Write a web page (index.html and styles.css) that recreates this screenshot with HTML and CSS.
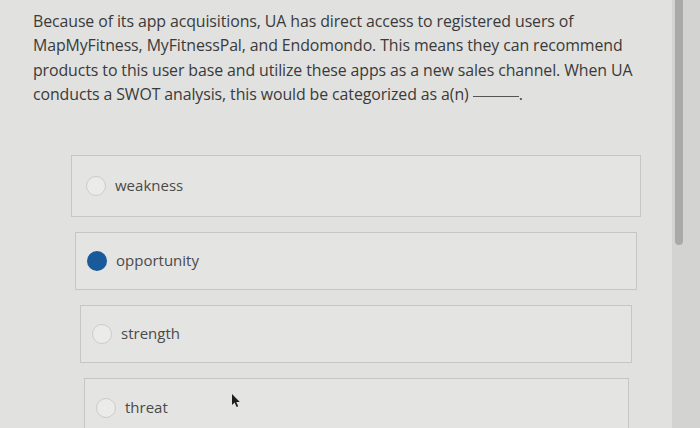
FILE: index.html
```html
<!DOCTYPE html>
<html>
<head>
<meta charset="utf-8">
<link rel="stylesheet" href="styles.css">
</head>
<body>
<div class="screen">
  <main class="page">
    <p class="question">Because of its app acquisitions, UA has direct access to registered users of<br>MapMyFitness, MyFitnessPal, and Endomondo. This means they can recommend<br>products to this user base and utilize these apps as a new sales channel. When UA<br>conducts a SWOT analysis, this would be categorized as a(n) <span class="blank"></span>.</p>
    <div class="options">
      <label class="option o1"><span class="radio"></span><span class="label">weakness</span></label>
      <label class="option o2"><span class="radio checked"></span><span class="label">opportunity</span></label>
      <label class="option o3"><span class="radio"></span><span class="label">strength</span></label>
      <label class="option o4"><span class="radio"></span><span class="label">threat</span>
        <svg class="cursor" width="10" height="15" viewBox="0 0 10 15"><path d="M1 1 L1 12 L3.6 9.6 L5.6 14 L7.2 13.3 L5.3 9 L8.8 9 Z" fill="#1e1e1e"/></svg>
      </label>
    </div>
  </main>
  <aside class="rail"><div class="thumb"></div></aside>
</div>
</body>
</html>
```
FILE: styles.css
```css
html, body { margin: 0; padding: 0; }
body {
  width: 700px; height: 428px; overflow: hidden;
  background: #dcdcda;
  font-family: "Open Sans", "Noto Sans", sans-serif;
  color: #3a3a3a;
}
.screen { display: flex; height: 428px; }
.page { flex: 0 0 672px; background: #e1e1df; }
.rail { flex: 1; background: #d3d3d1; position: relative; }
.thumb { position: absolute; left: 3px; top: 0; width: 8px; height: 245px; background: #a9a9a8; border-radius: 0 0 4px 4px; }
.question {
  margin: 9px 0 0 33px; width: 630px; white-space: nowrap;
  font-size: 15.9px; line-height: 24.3px; letter-spacing: -0.1px;
}
.blank { display: inline-block; width: 46px; border-bottom: 1px solid #555; vertical-align: 3px; }
.options { display: flex; flex-direction: column; gap: 15px; margin-top: 49px; }
.option {
  display: flex; align-items: center; gap: 9px;
  height: 59px; box-sizing: border-box;
  border: 1px solid #c6c6c4; background: #e4e4e2;
  font-size: 15px; color: #4a4a4a; position: relative;
}
.o1 { margin-left: 71px; width: 570px; padding-left: 14px; height: 62px; }
.o2 { margin-left: 75px; width: 562px; padding-left: 11px; height: 58px; }
.o3 { margin-left: 80px; width: 552px; padding-left: 11px; height: 58px; }
.o4 { margin-left: 84px; width: 545px; padding-left: 11px; height: 60px; }
.radio {
  width: 20px; height: 20px; border-radius: 50%; flex: none;
  border: 1.5px solid #cbcbc9; background: #ebebea; box-sizing: border-box;
}
.radio.checked { border: none; background: #185a9a; }
.label { padding-bottom: 3px; }
.cursor { position: absolute; left: 146px; top: 14px; }
```
